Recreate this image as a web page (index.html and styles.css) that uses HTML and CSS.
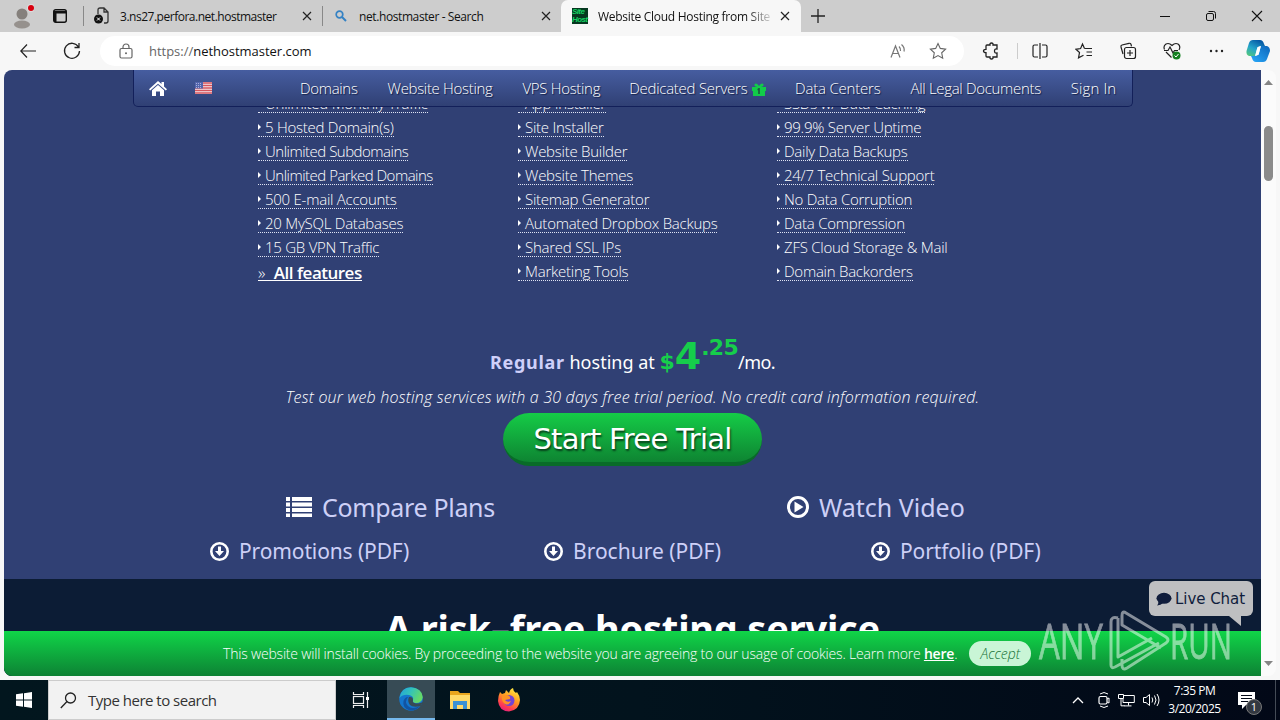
FILE: index.html
```html
<!DOCTYPE html>
<html lang="en">
<head>
  <meta charset="UTF-8">
  <title>Website Cloud Hosting from Site Host</title>
  <link rel="stylesheet" href="styles.css">
</head>
<body>

<!-- tabs -->
<header class="tabs">
  <svg class="profile" width="24" height="28" viewBox="0 0 24 28"><circle cx="12" cy="12" r="5.500" fill="#85807c"/><ellipse cx="12" cy="22.500" rx="8" ry="4" fill="#96918d"/><circle cx="21" cy="6" r="4" fill="#ddd"/><circle cx="21" cy="6" r="3" fill="#d8000f"/></svg>
  <svg class="workspace" width="16" height="16" viewBox="0 0 16 16"><rect x="1.700" y="1.700" width="12.600" height="12.600" rx="2" fill="none" stroke="#111" stroke-width="1.400"/><path d="M2 3h12v2.500H2zM2 5h2.500v9H2z" fill="#111"/></svg>
  <span class="tab-line"></span>
  <div class="tab tab-one">
    <svg width="16" height="18" viewBox="0 0 16 18"><path d="M4 7V3q0-2 2-2h4l4 4v9q0 2-2 2h-2M10 1v4h4" fill="none" stroke="#333" stroke-width="1.300"/><circle cx="4.500" cy="12" r="4.500" fill="#111"/><path d="M3 10.500l3 3m0-3l-3 3" stroke="#fff"/></svg>
    <span class="tab-title">3.ns27.perfora.net.hostmaster</span>
    <svg class="x" width="10" height="10" viewBox="0 0 10 10"><path d="M1 1l8 8m0-8L1 9" stroke="#222" stroke-width="1.200"/></svg>
  </div>
  <span class="tab-line"></span>
  <div class="tab tab-two">
    <svg width="12" height="12" viewBox="0 0 12 12"><circle cx="4.500" cy="4.500" r="3.300" fill="none" stroke="#3482c4" stroke-width="1.700"/><path d="M7 7l4 4" stroke="#3482c4" stroke-width="2"/></svg>
    <span class="tab-title">net.hostmaster - Search</span>
    <svg class="x" width="10" height="10" viewBox="0 0 10 10"><path d="M1 1l8 8m0-8L1 9" stroke="#222" stroke-width="1.200"/></svg>
  </div>
  <div class="tab tab-active">
    <span class="favicon"><b>Site</b><b>Host</b></span>
    <span class="tab-title fade">Website Cloud Hosting from Site</span>
    <svg class="x" width="10" height="10" viewBox="0 0 10 10"><path d="M1 1l8 8m0-8L1 9" stroke="#222" stroke-width="1.200"/></svg>
  </div>
  <svg class="plus" width="16" height="16" viewBox="0 0 16 16"><path d="M8 1v14M1 8h14" stroke="#222" stroke-width="1.300"/></svg>
  <div class="window-buttons">
    <svg width="12" height="12" viewBox="0 0 12 12"><path d="M1 6.500h10" stroke="#111"/></svg>
    <svg width="12" height="12" viewBox="0 0 12 12"><rect x="1.500" y="3.500" width="7" height="7" rx="1.500" fill="none" stroke="#111"/><path d="M3.500 1.500h5q2 0 2 2v5" fill="none" stroke="#111"/></svg>
    <svg width="12" height="12" viewBox="0 0 12 12"><path d="M1 1l10 10M11 1L1 11" stroke="#111" stroke-width="1.100"/></svg>
  </div>
</header>

<!-- address bar -->
<div class="toolbar">
  <svg class="back" width="16" height="14" viewBox="0 0 16 14"><path d="M7 .5L.8 7 7 13.500M1 7h15" fill="none" stroke="#222" stroke-width="1.200"/></svg>
  <svg class="reload" width="18" height="18" viewBox="0 0 18 18"><path d="M15.500 5A7.500 7.500 0 1 0 16.500 9M16 1v4.500h-4.500" fill="none" stroke="#222" stroke-width="1.300"/></svg>
  <div class="address">
    <svg class="lock" width="14" height="16" viewBox="0 0 14 16"><rect x="1" y="5.500" width="12" height="9.500" rx="1.500" fill="none" stroke="#666" stroke-width="1.200"/><path d="M4 5.500V4a3 3 0 0 1 6 0v1.500" fill="none" stroke="#666" stroke-width="1.200"/><circle cx="7" cy="10.300" r="1" fill="#666"/></svg>
    <span class="url"><i>https://</i>nethostmaster.com</span>
    <svg class="read" width="16" height="16" viewBox="0 0 16 16"><path d="M1 14.500L5.500 3 10 14.500M2.700 10.500h5.700M9 3.500q2 2 1.500 4.500M11.500 1.500q3.500 3 2.500 7" fill="none" stroke="#777" stroke-width="1.200"/></svg>
    <svg width="18" height="18" viewBox="0 0 18 18"><path d="M9 1.500l2.300 4.900 5.300.7-3.900 3.700 1 5.400L9 13.600l-4.700 2.600 1-5.400-3.900-3.700 5.300-.7z" fill="none" stroke="#666" stroke-width="1.100"/></svg>
  </div>
  <div class="tools">
    <svg width="18" height="18" viewBox="0 0 18 18"><path d="M5 3h3q-.3-2 1.500-2T11 3h4v4q-2.500-.5-2.500 2t2.500 2v4h-4q.3 2-1.500 2T8 15H5q-1 0-1-1v-3.300q-2.500 0-2.500-1.700T4 7.300V4q0-1 1-1z" fill="none" stroke="#222" stroke-width="1.300"/></svg>
    <span class="tool-line"></span>
    <svg width="18" height="18" viewBox="0 0 18 18"><path d="M7 3H3.500Q2 3 2 4.500v9Q2 15 3.500 15H7M11 3h3.500Q16 3 16 4.500v9q0 1.500-1.500 1.500H11M9 1v16" fill="none" stroke="#222" stroke-width="1.200"/></svg>
    <svg width="18" height="18" viewBox="0 0 18 18"><path d="M9.500 6.500H17M11.500 10H17M11.500 13.500H17M9.500 6.500L7.500 2 5.600 6.500l-4.600.8 3.500 3.200-1 5.300 5-2.500" fill="none" stroke="#222" stroke-width="1.200"/></svg>
    <svg width="18" height="18" viewBox="0 0 18 18"><path d="M4 12l-2-7q-.5-1.500 1-2l7-1.700q1.500-.3 2 1l.5 2" fill="none" stroke="#222" stroke-width="1.200"/><rect x="5.500" y="5.500" width="11" height="11" rx="2" fill="none" stroke="#222" stroke-width="1.200"/><path d="M11 8v6M8 11h6" stroke="#222" stroke-width="1.200"/></svg>
    <svg width="18" height="18" viewBox="0 0 18 18"><path d="M1.500 7.500Q0 4 3 2q3-1.500 6 1.500Q12 .5 15 2q3 2 1 6M3 10l5.500 5.500M1 8.500h4L7 5l3 6 1.500-2.500H15" fill="none" stroke="#222" stroke-width="1.200"/><circle cx="13.500" cy="13.500" r="4" fill="#148020"/><path d="M11.500 13.500l1.500 1.500 2.500-3" fill="none" stroke="#fff"/></svg>
    <svg width="18" height="18" viewBox="0 0 18 18"><g fill="#222"><circle cx="4" cy="9" r="1.200"/><circle cx="9.500" cy="9" r="1.200"/><circle cx="15" cy="9" r="1.200"/></g></svg>
  </div>
  <svg class="copilot" width="24" height="24" viewBox="0 0 24 24">
    <defs>
      <linearGradient id="cop1" x1="0" y1="1" x2="0.600" y2="0"><stop offset="0" stop-color="#58cb72"/><stop offset=".5" stop-color="#25a5cb"/><stop offset="1" stop-color="#075ba6"/></linearGradient>
      <linearGradient id="cop2" x1="1" y1="0" x2="0" y2="1"><stop offset="0" stop-color="#0d66ba"/><stop offset="1" stop-color="#29a9fa"/></linearGradient>
    </defs>
    <path d="M7 1h7q3 0 4 4l1 2h-5q-2 0-3 3l-2 7H3Q0 16 .5 12L3 4q1-3 4-3z" fill="url(#cop1)"/>
    <path d="M17 23h-7q-3 0-4-4l-1-2h5q2 0 3-3l2-7h6q3 1 3 5l-3 8q-1 3-4 3z" fill="url(#cop2)"/>
    <path d="M11.500 8h3l-2 8h-3z" fill="#fff"/>
  </svg>
</div>

<div class="viewport">
  <main class="site">
    <nav class="menu">
      <svg class="home" width="18" height="15" viewBox="0 0 18 15"><path d="M9 0l3.500 3V1H15v4.500l3 2.800-1.200 1.300L9 2.800 1.200 9.600 0 8.300z" fill="#fff"/><path d="M9 4l6 5.200V15h-4v-4.500H7V15H3V9.200z" fill="#fff"/></svg>
      <svg class="flag" width="17" height="12" viewBox="0 0 17 12"><rect width="17" height="12" fill="#f3e8ee"/><path d="M0 1h17M0 3.500h17M0 6h17M0 8.500h17M0 11h17" stroke="#d6555e" stroke-width="1.300"/><rect width="8" height="6.500" fill="#5365ad"/><path d="M1 1.500h6M1 3.500h6M1 5.500h6" stroke="#cbd0ee" stroke-width=".7" stroke-dasharray="1 1"/></svg>
      <div class="menu-items">
        <a>Domains</a>
        <a>Website Hosting</a>
        <a>VPS Hosting</a>
        <a>Dedicated Servers <svg width="14" height="13" viewBox="0 0 14 13"><path d="M0 4h14v4h-1v5H1V8H0zM7 4Q2 4 2.500 1.500 4-1 7 3q3-4 4.500-1.500Q12 4 7 4z" fill="#12cc49"/><path d="M7 5v6M5.500 6.500H7" stroke="#1d5540" stroke-width="1.600"/></svg></a>
        <a>Data Centers</a>
        <a>All Legal Documents</a>
        <a>Sign In</a>
      </div>
    </nav>

    <section class="plan">
      <div class="features">
        <ul>
          <li><a>Unlimited Monthly Traffic</a></li>
          <li><a>5 Hosted Domain(s)</a></li>
          <li><a class="tight">Unlimited Subdomains</a></li>
          <li><a class="tight">Unlimited Parked Domains</a></li>
          <li><a>500 E-mail Accounts</a></li>
          <li><a>20 MySQL Databases</a></li>
          <li><a>15 GB VPN Traffic</a></li>
          <li class="all"><span>»</span> <b>All features</b></li>
        </ul>
        <ul>
          <li><a>App Installer</a></li>
          <li><a>Site Installer</a></li>
          <li><a>Website Builder</a></li>
          <li><a>Website Themes</a></li>
          <li><a>Sitemap Generator</a></li>
          <li><a>Automated Dropbox Backups</a></li>
          <li><a>Shared SSL IPs</a></li>
          <li><a>Marketing Tools</a></li>
        </ul>
        <ul>
          <li><a>SSDs w/ Data Caching</a></li>
          <li><a>99.9% Server Uptime</a></li>
          <li><a>Daily Data Backups</a></li>
          <li><a>24/7 Technical Support</a></li>
          <li><a>No Data Corruption</a></li>
          <li><a>Data Compression</a></li>
          <li><a class="plain">ZFS Cloud Storage &amp; Mail</a></li>
          <li><a>Domain Backorders</a></li>
        </ul>
      </div>

      <p class="price"><b class="regular">Regular</b> <span class="at">hosting at</span> <b class="dollar">$</b><b class="four">4</b><b class="cents">.25</b><span class="mo">/mo.</span></p>
      <p class="test">Test our web hosting services with a 30 days free trial period. No credit card information required.</p>
      <a class="trial">Start Free Trial</a>

      <div class="links big">
        <a><svg width="26" height="20" viewBox="0 0 26 20"><path d="M0 0h4v4H0zM6 0h20v4H6zM0 5.500h4v4H0zM6 5.500h20v4H6zM0 11h4v4H0zM6 11h20v4H6zM0 16.500h4V20H0zM6 16.500h20V20H6z" fill="#fff"/></svg><span>Compare Plans</span></a>
        <a><svg width="22" height="22" viewBox="0 0 22 22"><circle cx="11" cy="11" r="9.500" fill="none" stroke="#fff" stroke-width="3"/><path d="M7.500 5.500l9 5.500-9 5.500z" fill="#fff"/></svg><span>Watch Video</span></a>
      </div>
      <div class="links pdf">
        <a><svg width="19" height="19" viewBox="0 0 19 19"><circle cx="9.500" cy="9.500" r="8.200" fill="none" stroke="#fff" stroke-width="2.600"/><path d="M8 4.500h3V9h3l-4.500 5L5 9h3z" fill="#fff"/></svg><span>Promotions (PDF)</span></a>
        <a><svg width="19" height="19" viewBox="0 0 19 19"><circle cx="9.500" cy="9.500" r="8.200" fill="none" stroke="#fff" stroke-width="2.600"/><path d="M8 4.500h3V9h3l-4.500 5L5 9h3z" fill="#fff"/></svg><span>Brochure (PDF)</span></a>
        <a><svg width="19" height="19" viewBox="0 0 19 19"><circle cx="9.500" cy="9.500" r="8.200" fill="none" stroke="#fff" stroke-width="2.600"/><path d="M8 4.500h3V9h3l-4.500 5L5 9h3z" fill="#fff"/></svg><span>Portfolio (PDF)</span></a>
      </div>
    </section>

    <section class="risk"><h2>A risk–free hosting service</h2></section>

    <div class="cookies">
      <span class="cookie-text">This website will install cookies. By proceeding to the website you are agreeing to our usage of cookies. Learn more <b>here</b>.</span>
      <span class="accept">Accept</span>
    </div>

    <div class="chat">
      <svg width="16" height="14" viewBox="0 0 16 14"><ellipse cx="8" cy="6.300" rx="7.500" ry="5.500" fill="#101d3c"/><path d="M2.500 9q0 3-1.500 4.500 4-.5 6-2.500z" fill="#101d3c"/></svg>
      <span>Live Chat</span>
    </div>
  </main>
  <aside class="scrollbar">
    <svg width="9" height="5" viewBox="0 0 9 5"><path d="M4.500 0L9 5H0z" fill="#858585"/></svg>
    <span class="thumb"></span>
    <svg class="down" width="9" height="5" viewBox="0 0 9 5"><path d="M4.500 5L9 0H0z" fill="#858585"/></svg>
  </aside>
</div>

<!-- watermark -->
<svg class="anyrun" width="200" height="70" viewBox="0 0 200 70">
  <g fill="#fff" stroke="#fff" stroke-width=".8">
    <text x="2" y="54" textLength="64" lengthAdjust="spacingAndGlyphs">ANY</text>
    <text x="133" y="54" textLength="62" lengthAdjust="spacingAndGlyphs">RUN</text>
  </g>
  <path d="M81 13q-7-2-7 4v43q0 4 4 2l44-24M81 13v39l34-19M85 54v6q0 6 5 3l39-25q4-3 0-6L89 8q-4-3-4 3v9l39 23" fill="none" stroke="#fff" stroke-width="3" stroke-linejoin="round"/>
</svg>

<footer class="taskbar">
  <span class="start"><svg width="16" height="16" viewBox="0 0 16 16"><path d="M0 2.300l7-1V7.500H0zM8 1.200L16 0v7.500H8zM0 8.500h7v6.200l-7-1zM8 8.500h8V16l-8-1.200z" fill="#fff"/></svg></span>
  <div class="search">
    <svg width="17" height="17" viewBox="0 0 17 17"><circle cx="10.500" cy="6" r="5" fill="none" stroke="#222" stroke-width="1.300"/><path d="M7 9.500L.8 16" stroke="#222" stroke-width="1.300"/></svg>
    <span>Type here to search</span>
  </div>
  <span class="task"><svg width="18" height="16" viewBox="0 0 18 16"><path d="M1.500 0v2.500h10V0M1.500 16v-2.500h10V16M15.500 0v16" fill="none" stroke="#eee" stroke-width="1.200"/><rect x="1.500" y="4.500" width="10" height="7" fill="none" stroke="#eee" stroke-width="1.200"/><path d="M14 5h3v3h-3z" fill="#fff"/></svg></span>
  <span class="task task-on">
    <svg width="24" height="24" viewBox="0 0 24 24">
      <defs><linearGradient id="edge" x1="0" y1="0" x2="1" y2=".4"><stop offset="0" stop-color="#239fdc"/><stop offset=".5" stop-color="#32c2bb"/><stop offset="1" stop-color="#65d968"/></linearGradient></defs>
      <circle cx="12" cy="12" r="11.800" fill="#1476ce"/>
      <path d="M.4 11Q2 .4 12 .2q11 .8 11.800 10Q23 16 17 16q-4-.2-3-3 1-4-4-5Q4 7 .4 11z" fill="url(#edge)"/>
      <path d="M9 10q-4 5 0 9t12 0q-4 5-10 4.500Q3 21 4.500 14 6 10 9 10z" fill="#1254a2"/>
      <path d="M10 10q4-.5 4 3-1 3 3 3.500 3 .2 7-1.500l-2 4q-8 2-11-1-3-4-1-8z" fill="#374b55"/>
    </svg>
  </span>
  <span class="task"><svg width="22" height="20" viewBox="0 0 22 20"><path d="M1 1h8l2 2h10v16H1z" fill="#e9a51e"/><path d="M1 5h20v14H1z" fill="#ffd968"/><path d="M4 19v-8h14v8h-4v-4H8v4z" fill="#3b91d3"/></svg></span>
  <span class="task"><svg width="24" height="24" viewBox="0 0 24 24">
    <defs><linearGradient id="fox" x1=".8" y1="0" x2=".3" y2="1"><stop offset="0" stop-color="#fff044"/><stop offset=".45" stop-color="#ff9b22"/><stop offset=".8" stop-color="#ff3c50"/><stop offset="1" stop-color="#e3207f"/></linearGradient></defs>
    <path d="M3 4l2 2 3-1 1-3 3 3q1-4 4-5 0 3 3 5l1-1q3 4 3 8-.5 10-11 11.500Q2 23 1 13q0-5 2-9z" fill="url(#fox)"/>
    <circle cx="12" cy="12.500" r="5.500" fill="#7243d6"/><path d="M5 8l5-1q4 1 3 4l-5 1q2 3 6 1-2 5-6 3-4-3-3-8z" fill="#ff9423"/>
  </svg></span>
  <div class="tray">
    <svg width="12" height="8" viewBox="0 0 12 8"><path d="M1 7l5-5 5 5" fill="none" stroke="#fff" stroke-width="1.300"/></svg>
    <svg width="12" height="18" viewBox="0 0 12 18"><path d="M2 3q4-3 8 0M2 15q4 3 8 0M9 8l2-1v5l-2-1" fill="none" stroke="#fff"/><rect x="1" y="5.500" width="8" height="7.500" rx="1.500" fill="none" stroke="#fff" stroke-width="1.200"/></svg>
    <svg width="17" height="14" viewBox="0 0 17 14"><path d="M6 2.500h10.300v7H5V6M10.500 9.500v3M6.500 12.900h7M3 5.500v7.300h4" fill="none" stroke="#fff"/><path d="M.5 1.500h5v4h-5z" fill="none" stroke="#fff"/></svg>
    <svg width="17" height="14" viewBox="0 0 17 14"><path d="M.5 4.500H3L6.500 1.500v11L3 9.500H.5zM9 4.500q1.500 2.500 0 5M11.500 2.500q3 4.500 0 9M14 1q4 6 0 12" fill="none" stroke="#fff"/></svg>
  </div>
  <div class="clock">7:35 PM<br>3/20/2025</div>
  <div class="notice"><svg width="17" height="17" viewBox="0 0 17 17"><path d="M0 0h17v13H8l-4 4v-4H0z" fill="#fff"/><path d="M3 3.500h11M3 6.500h11M3 9.500h7" stroke="#020817"/></svg><span>1</span></div>
  <span class="show-desktop"></span>
</footer>

</body>
</html>
```
FILE: styles.css
```css
* { box-sizing: border-box; }
body { margin: 0; width: 1280px; height: 720px; overflow: hidden; position: relative; display: flex; flex-direction: column; background: #f7f7f7; font-family: "Open Sans", "Noto Sans", sans-serif; }
svg { display: block; flex: none; }
p, h2, ul { margin: 0; padding: 0; }
span, a, p { white-space: nowrap; }

/* browser */
.tabs { height: 32px; flex: none; display: flex; align-items: center; background: #cdcdcd; font-size: 12px; color: #111; }
.profile { margin-left: 10px; }
.workspace { margin: 0 15px 0 18px; }
.tab-line { width: 1px; height: 20px; background: #888; }
.tab { height: 32px; display: flex; align-items: center; }
.tab .x { margin-left: auto; }
.tab-one { width: 238px; padding: 0 10px; }
.tab-one .tab-title { margin-left: 10px; letter-spacing: -.48px; }
.tab-two { width: 238px; padding: 0 10px 0 12px; }
.tab-two .tab-title { margin-left: 12px; letter-spacing: -.4px; }
.tab-active { width: 240px; padding: 0 11px; background: #f7f7f7; border-radius: 7px 7px 0 0; }
.tab-active .tab-title { margin-left: 10px; letter-spacing: -.28px; }
.fade { background: linear-gradient(90deg, #111 86%, #ccc); background-clip: text; -webkit-background-clip: text; color: transparent; }
.favicon { width: 16px; height: 16px; background: #063820; color: #15d262; font: italic bold 8px/8px "Liberation Sans", sans-serif; letter-spacing: -.6px; }
.favicon b { display: block; }
.plus { margin-left: 9px; }
.window-buttons { margin-left: auto; display: flex; gap: 34px; padding-right: 17px; }
.toolbar { height: 38px; flex: none; display: flex; align-items: center; background: #f7f7f7; }
.back { margin-left: 20px; }
.reload { margin: 0 19px 0 27px; }
.address { width: 864px; height: 30px; background: #fff; border-radius: 15px; display: flex; align-items: center; padding: 0 17px 0 19px; flex: none; }
.url { margin-left: 16px; font-size: 13px; color: #111; letter-spacing: -.02px; }
.url i { font-style: normal; color: #666; }
.read { margin: 0 23px 0 auto; }
.tools { display: flex; align-items: center; margin-left: 18px; }
.tools svg { margin-right: 26px; }
.tools svg:first-child { margin-right: 17px; }
.tools svg:last-child { margin-right: 21px; }
.tool-line { width: 1px; height: 16px; background: #ccc; margin-right: 13px; }

.viewport { height: 606px; flex: none; margin: 0 4px; display: flex; border-radius: 8px; overflow: hidden; background: #fbfbfb; }
.site { width: 1257px; position: relative; display: flex; flex-direction: column; background: #304074; color: #fff; }

.menu { position: absolute; z-index: 2; left: 129px; top: 0; width: 1000px; height: 37px; display: flex; align-items: center; padding: 0 15px; border: 1px solid #13205a; border-top: 0; border-radius: 0 0 5px 5px; background: linear-gradient(#465da0, #304074); }
.flag { margin-left: 28px; }
.menu-items { display: flex; gap: 30px; margin-left: 88px; font-size: 15px; font-weight: 300; letter-spacing: -.32px; text-shadow: 1px 1px 1px #111d45; }
.menu-items a:nth-child(4) { margin-left: -1px; letter-spacing: -.25px; margin-right: -1px; }
.menu-items a:nth-child(5) { letter-spacing: -.2px; }
.menu-items a:nth-child(6) { letter-spacing: -.32px; }
.menu-items a:last-child { letter-spacing: .1px; }
.menu-items svg { display: inline-block; vertical-align: -2px; margin-left: 1px; }

.plan { height: 509px; flex: none; padding-top: 20px; display: flex; flex-direction: column; align-items: center; }
.features { align-self: flex-start; margin-left: 254px; display: grid; grid-template-columns: 260px 259px 260px; font-size: 15px; font-weight: 300; letter-spacing: -.25px; }
.features ul { list-style: none; }
.features li { height: 24px; }
.features a { display: inline-flex; align-items: center; height: 21px; padding-top: 3px; line-height: 18px; border-bottom: 1px dotted #dfe4f3; }
.features a::before { content: ""; border: 3px solid transparent; border-left-color: #fff; border-right: 0; margin-right: 4px; }
.features .plain { border-color: transparent; }
.features .tight { letter-spacing: -.5px; }
.features .all { width: max-content; height: 21px; line-height: 25px; border-bottom: 1px solid #fff; font-size: 17px; letter-spacing: -.5px; margin-top: 2px; }
.all span { margin-right: 5px; }
.all b { font-weight: 600; }

.price { margin-top: 44px; height: 60px; line-height: 60px; font-size: 18px; font-weight: 400; }
.price b { font-family: "DejaVu Sans", sans-serif; }
.price .regular { font: bold 18px "Noto Sans", sans-serif; letter-spacing: .7px; color: #cfd0fa; }
.at, .mo { font-family: "Noto Sans", sans-serif; }
.mo { letter-spacing: -.6px; }
.price .dollar, .price .four, .price .cents { color: #16ce4b; }
.dollar { font-size: 22px; }
.four { font-size: 38px; }
.cents { font-size: 22px; position: relative; top: -14px; letter-spacing: -.7px; }
.test { height: 30px; margin-top: -3px; line-height: 28px; font-size: 16px; font-style: italic; font-weight: 300; letter-spacing: .2px; }
.trial { width: 259px; height: 53px; border-radius: 27px; text-align: center; font: 29px/52px "DejaVu Sans", sans-serif; letter-spacing: -.75px; text-shadow: 1px 2px 2px #073d1a; background: linear-gradient(#15cc47, #0e8432); border-bottom: 4px solid #096b29; }
.links { align-self: stretch; display: flex; color: #cdd0f7; font-family: "Noto Sans", sans-serif; }
.links a { display: flex; align-items: center; }
.big { height: 44px; margin: 19px 0 0 282px; font-size: 25px; }
.big a:first-child { width: 501px; letter-spacing: -.33px; }
.big span { margin-left: 10px; }
.pdf { height: 44px; margin: 0 0 0 206px; font-size: 21px; letter-spacing: -.12px; }
.pdf a { width: 334px; }
.pdf a:nth-child(2) { width: 327px; letter-spacing: 0; }
.pdf span { margin-left: 10px; }

.risk { flex: 1; padding-top: 26px; background: #0c1c35; text-align: center; }
.risk h2 { font: bold 38px/46px "Noto Sans", sans-serif; letter-spacing: -.2px; white-space: nowrap; }
.cookies { position: absolute; left: 0; bottom: 0; width: 100%; height: 45px; display: flex; align-items: center; padding-left: 219px; background: linear-gradient(#10d548, #0d8234); font-size: 14px; font-weight: 300; }
.cookie-text { letter-spacing: -.19px; }
.cookies b { font-weight: 600; text-decoration: underline; }
.accept { width: 62px; height: 25px; margin-left: 12px; border-radius: 13px; background: #c9f5d6; color: #177136; text-align: center; line-height: 25px; font-style: italic; }
.chat { position: absolute; left: 1145px; top: 511px; width: 104px; height: 35px; border-radius: 6px; display: flex; align-items: center; padding-left: 7px; background: #bebfc1; color: #101d3c; font: 15px "DejaVu Sans", sans-serif; }
.chat span { margin-left: 3px; letter-spacing: -.05px; }
.chat::after { content: ""; position: absolute; top: 35px; right: 12px; border-top: 10px solid #bebfc1; border-left: 12px solid transparent; }
.scrollbar { width: 15px; display: flex; flex-direction: column; align-items: center; padding: 10px 0; }
.thumb { width: 9px; height: 55px; margin-top: 41px; border-radius: 5px; background: #8b8b8b; }
.scrollbar .down { margin-top: auto; }

.anyrun { position: absolute; left: 1037px; top: 605px; opacity: .5; z-index: 3; font: 400 50px "Open Sans", sans-serif; }

/* taskbar */
.taskbar { height: 40px; flex: none; margin-top: 4px; display: flex; align-items: center; color: #fff; background: linear-gradient(90deg, #02161e, #02131d 50%, #020817); }
.start { width: 48px; display: flex; justify-content: center; }
.search { width: 288px; height: 40px; display: flex; align-items: center; padding-left: 11px; background: #f2f2f2; border: 1px solid #ccc; color: #333; font-size: 15px; }
.search span { margin-left: 11px; letter-spacing: -.5px; }
.task { width: 49px; height: 40px; display: flex; align-items: center; justify-content: center; }
.task-on { width: 48px; margin-left: 2px; background: #374b55; border-bottom: 2px solid #76b9ed; }
.tray { margin-left: auto; display: flex; align-items: center; gap: 8px; }
.tray svg:first-child { margin-right: 6px; }
.clock { width: 69px; text-align: center; font-size: 12px; line-height: 18px; letter-spacing: -.5px; }
.notice { position: relative; width: 46px; padding-left: 9px; }
.notice span { position: absolute; left: 17px; top: 7px; width: 16px; height: 16px; border: 1px solid #777; border-radius: 50%; background: #333841; font-size: 11px; line-height: 14px; text-align: center; }
.show-desktop { width: 5px; height: 40px; border-left: 1px solid #444b56; }
```
